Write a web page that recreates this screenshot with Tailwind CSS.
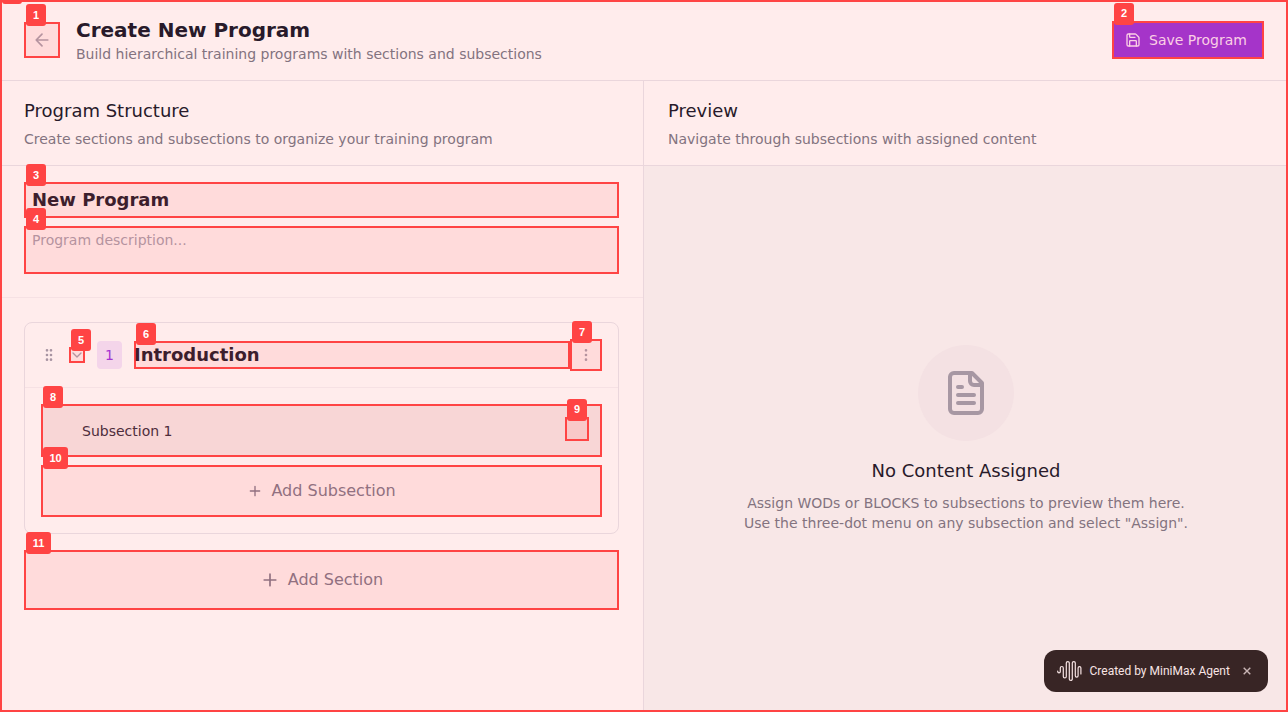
<!DOCTYPE html>
<html lang="en">
<head>
<meta charset="utf-8">
<title>Create New Program</title>
<script src="https://cdn.jsdelivr.net/npm/@tailwindcss/browser@4"></script>
</head>
<body class="h-[712px] w-[1288px] overflow-hidden bg-[#ffecec] font-['DejaVu_Sans',sans-serif] text-[#281a2a]">
<div class="relative flex h-full w-full flex-col">
  <header class="flex h-[81px] shrink-0 items-center border-b border-[#ead6dc] pl-6 pr-6">
    <button class="relative flex size-9 items-center justify-center border-2 border-[#ff4444] bg-[#ffdbdb] text-[#b5939f]">
      <svg class="size-5 shrink-0" viewBox="0 0 24 24" fill="none" stroke="currentColor" stroke-width="2" stroke-linecap="round" stroke-linejoin="round"><path d="m12 19-7-7 7-7M19 12H5"/></svg>
      <span class="absolute -top-5 left-0 flex h-[22px] w-5 items-center justify-center rounded-[3px] bg-[#ff4444] font-['Liberation_Sans',sans-serif] text-[11px] font-bold text-white">1</span>
    </button>
    <div class="ml-4">
      <h1 class="text-xl leading-7 font-bold">Create New Program</h1>
      <p class="text-sm leading-5 text-[#83737f]">Build hierarchical training programs with sections and subsections</p>
    </div>
    <button class="relative ml-auto flex h-[38px] w-[152px] items-center border-2 border-[#ff4444] bg-[#a534c9] pl-[11px] text-sm text-[#fbcfe5]">
      <svg class="mr-2 size-4 shrink-0" viewBox="0 0 24 24" fill="none" stroke="currentColor" stroke-width="2" stroke-linecap="round" stroke-linejoin="round"><path d="M15.2 3a2 2 0 0 1 1.4.6l3.8 3.8a2 2 0 0 1 .6 1.4V19a2 2 0 0 1-2 2H5a2 2 0 0 1-2-2V5a2 2 0 0 1 2-2z"/><path d="M17 21v-7a1 1 0 0 0-1-1H8a1 1 0 0 0-1 1v7M7 3v4a1 1 0 0 0 1 1h7"/></svg>
      Save Program
      <span class="absolute -top-5 left-0 flex h-[22px] w-5 items-center justify-center rounded-[3px] bg-[#ff4444] font-['Liberation_Sans',sans-serif] text-[11px] font-bold text-white">2</span>
    </button>
  </header>

  <div class="flex min-h-0 flex-1">
    <section class="flex w-[644px] flex-col border-r border-[#ead6dc]">
      <div class="h-[85px] border-b border-[#ead6dc] px-6 pt-4">
        <h2 class="text-lg leading-7">Program Structure</h2>
        <p class="mt-1 text-sm leading-5 text-[#83737f]">Create sections and subsections to organize your training program</p>
      </div>
      <div class="flex h-[132px] flex-col gap-2 border-b border-[#f6e1e4] px-6 pt-4">
        <div class="relative flex h-9 items-center border-2 border-[#ff4444] bg-[#ffdbdb] pl-1.5 text-lg leading-7 font-bold text-[#3d1e2d]">New Program
          <span class="absolute -top-5 left-0 flex h-[22px] w-5 items-center justify-center rounded-[3px] bg-[#ff4444] font-['Liberation_Sans',sans-serif] text-[11px] font-bold text-white">3</span>
        </div>
        <div class="relative h-12 border-2 border-[#ff4444] bg-[#ffdbdb] pt-0.5 pl-1.5 text-sm leading-5 text-[#b5939f]">Program description...
          <span class="absolute -top-5 left-0 flex h-[22px] w-5 items-center justify-center rounded-[3px] bg-[#ff4444] font-['Liberation_Sans',sans-serif] text-[11px] font-bold text-white">4</span>
        </div>
      </div>

      <div class="flex flex-col gap-4 px-6 pt-6">
        <div class="h-[212px] rounded-lg border border-[#ead6dc]">
          <div class="flex h-[65px] items-center border-b border-[#f6e1e4] px-4">
            <svg class="size-4 shrink-0 text-[#a794a2]" viewBox="0 0 24 24" fill="none" stroke="currentColor" stroke-width="2"><circle cx="9" cy="12" r="1"/><circle cx="9" cy="5" r="1"/><circle cx="9" cy="19" r="1"/><circle cx="15" cy="12" r="1"/><circle cx="15" cy="5" r="1"/><circle cx="15" cy="19" r="1"/></svg>
            <button class="relative ml-3 flex size-4 items-center justify-center border-2 border-[#ff4444] bg-[#ffdbdb] text-[#b5939f]">
              <svg class="size-4 shrink-0" viewBox="0 0 24 24" fill="none" stroke="currentColor" stroke-width="2" stroke-linecap="round" stroke-linejoin="round"><path d="m6 9 6 6 6-6"/></svg>
              <span class="absolute -top-5 left-0 flex h-[22px] w-5 items-center justify-center rounded-[3px] bg-[#ff4444] pt-px font-['Liberation_Sans',sans-serif] text-[11px] font-bold text-white">5</span>
            </button>
            <span class="ml-3 flex h-7 w-[25px] items-center justify-center rounded bg-[#f4d5ea] text-sm text-[#a534d2]">1</span>
            <div class="relative ml-3 flex h-7 w-[436px] items-center border-2 border-[#ff4444] bg-[#ffdbdb] text-lg leading-7 font-bold text-[#3d1e2d]"><span class="-ml-0.5">Introduction</span>
              <span class="absolute -top-5 left-0 flex h-[22px] w-5 items-center justify-center rounded-[3px] bg-[#ff4444] font-['Liberation_Sans',sans-serif] text-[11px] font-bold text-white">6</span>
            </div>
            <button class="relative flex size-8 items-center justify-center border-2 border-[#ff4444] bg-[#ffdbdb] text-[#b5939f]">
              <svg class="size-4 shrink-0" viewBox="0 0 24 24" fill="none" stroke="currentColor" stroke-width="2"><circle cx="12" cy="12" r="1"/><circle cx="12" cy="5" r="1"/><circle cx="12" cy="19" r="1"/></svg>
              <span class="absolute -top-5 left-0 flex h-[22px] w-5 items-center justify-center rounded-[3px] bg-[#ff4444] font-['Liberation_Sans',sans-serif] text-[11px] font-bold text-white">7</span>
            </button>
          </div>
          <div class="flex flex-col gap-2 p-4">
            <div class="relative flex h-[53px] items-center border-2 border-[#ff4444] bg-[#f8d6d6] pr-[11px] pl-[39px] text-sm text-[#4e2d3c]">Subsection 1
              <button class="relative mb-1 ml-auto size-6 border-2 border-[#ff4444] bg-[#f9c8c8]">
                <span class="absolute -top-5 left-0 flex h-[22px] w-5 items-center justify-center rounded-[3px] bg-[#ff4444] pt-px font-['Liberation_Sans',sans-serif] text-[11px] font-bold text-white">9</span>
              </button>
              <span class="absolute -top-5 left-0 flex h-[22px] w-5 items-center justify-center rounded-[3px] bg-[#ff4444] pt-px font-['Liberation_Sans',sans-serif] text-[11px] font-bold text-white">8</span>
            </div>
            <button class="relative flex h-[52px] items-center justify-center gap-2 border-2 border-[#ff4444] bg-[#ffdbdb] text-base text-[#917080]">
              <svg class="size-4 shrink-0" viewBox="0 0 24 24" fill="none" stroke="currentColor" stroke-width="2" stroke-linecap="round"><path d="M5 12h14M12 5v14"/></svg>
              Add Subsection
              <span class="absolute -top-5 left-0 flex h-[22px] w-[25px] items-center justify-center rounded-[3px] bg-[#ff4444] font-['Liberation_Sans',sans-serif] text-[11px] font-bold text-white">10</span>
            </button>
          </div>
        </div>
        <button class="relative flex h-[60px] items-center justify-center gap-2 border-2 border-[#ff4444] bg-[#ffdbdb] text-base text-[#917080]">
          <svg class="size-5 shrink-0" viewBox="0 0 24 24" fill="none" stroke="currentColor" stroke-width="2" stroke-linecap="round"><path d="M5 12h14M12 5v14"/></svg>
          Add Section
          <span class="absolute -top-5 left-0 flex h-[22px] w-[25px] items-center justify-center rounded-[3px] bg-[#ff4444] font-['Liberation_Sans',sans-serif] text-[11px] font-bold text-white">11</span>
        </button>
      </div>
    </section>

    <section class="flex flex-1 flex-col">
      <div class="h-[85px] shrink-0 border-b border-[#ead6dc] px-6 pt-4">
        <h2 class="text-lg leading-7">Preview</h2>
        <p class="mt-1 text-sm leading-5 text-[#83737f]">Navigate through subsections with assigned content</p>
      </div>
      <div class="flex flex-1 flex-col items-center justify-center bg-[#f8e7e7] text-center">
        <div class="flex size-24 items-center justify-center rounded-full bg-[#f4e1e3] text-[#a797a3]">
          <svg class="size-12" viewBox="0 0 24 24" fill="none" stroke="currentColor" stroke-width="2" stroke-linecap="round" stroke-linejoin="round"><path d="M15 2H6a2 2 0 0 0-2 2v16a2 2 0 0 0 2 2h12a2 2 0 0 0 2-2V7Z"/><path d="M14 2v4a2 2 0 0 0 2 2h4M10 9H8M16 13H8M16 17H8"/></svg>
        </div>
        <h3 class="mt-4 text-lg leading-7">No Content Assigned</h3>
        <p class="mt-2 text-sm leading-5 text-[#83737f]">Assign WODs or BLOCKS to subsections to preview them here.<br>Use the three-dot menu on any subsection and select "Assign".</p>
      </div>
    </section>
  </div>

  <div class="absolute top-[650px] left-[1044px] flex h-[42px] w-56 items-center rounded-xl bg-[#382525] pl-[13px] font-[Roboto,sans-serif] text-xs text-[#f7e4e4]">
    <svg class="h-6 w-6 shrink-0 overflow-visible" viewBox="0 0 24 24" fill="none" stroke="currentColor" stroke-width="1.2" stroke-linecap="round"><path d="M.7 12v.6a1.3 1.3 0 0 0 2.6 0V9a1.5 1.5 0 0 1 3 0v8.4a1.5 1.5 0 0 0 3 0V4.1a1.5 1.5 0 0 1 3 0v15.8a1.5 1.5 0 0 0 3 0V4.1a1.5 1.5 0 0 1 3 0v12.7a1.4 1.4 0 0 0 2.8 0V9a1.4 1.4 0 0 1 2.8 0v6"/></svg>
    <span class="ml-[8.5px] whitespace-nowrap">Created by MiniMax Agent</span>
    <svg class="ml-[13px] size-2 shrink-0 text-[#c9b5b5]" viewBox="0 0 8 8" fill="none" stroke="currentColor" stroke-width="1.4"><path d="m.7.7 6.6 6.6M7.3.7.7 7.3"/></svg>
  </div>

  <div class="pointer-events-none absolute inset-0 border-2 border-[#ff4444]"></div>
  <div class="absolute top-0 left-0.5 h-1 w-5 rounded-b-[3px] bg-[#ff4444]"></div>
</div>
</body>
</html>
